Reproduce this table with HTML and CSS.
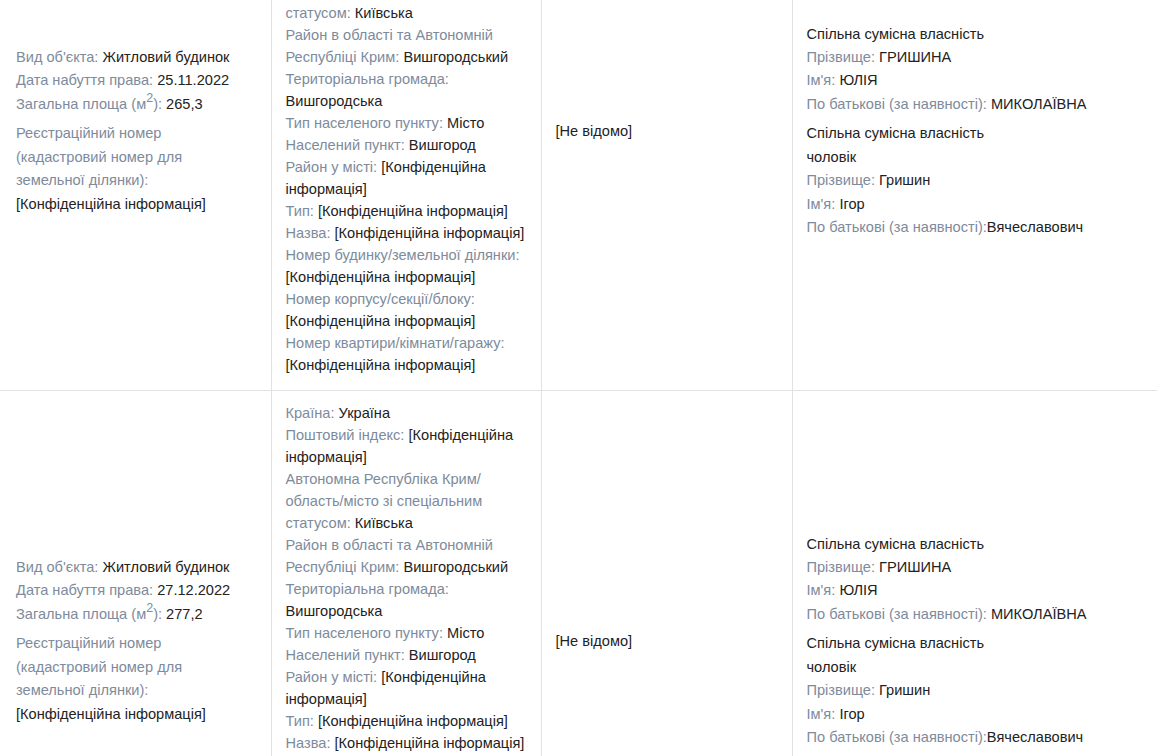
FILE: index.html
```html
<!DOCTYPE html>
<html lang="uk">
<head>
<meta charset="utf-8">
<title>Об'єкти нерухомості</title>
<link rel="stylesheet" href="styles.css">
</head>
<body>
<table class="grid">
  <colgroup>
    <col class="c1"><col class="c2"><col class="c3"><col class="c4">
  </colgroup>
  <tbody>
    <tr>
      <td class="cell side">
        <div class="block">
          <div class="line"><span class="lbl">Вид об'єкта:</span> Житловий будинок</div>
          <div class="line"><span class="lbl">Дата набуття права:</span> 25.11.2022</div>
          <div class="line"><span class="lbl">Загальна площа (м<sup class="sq">2</sup>):</span> 265,3</div>
        </div>
        <div class="block">
          <div class="line"><span class="lbl">Реєстраційний номер (кадастровий номер для земельної ділянки):</span><br>[Конфіденційна інформація]</div>
        </div>
      </td>
      <td class="cell addr">
        <div><span class="lbl">Країна:</span> Україна</div>
        <div><span class="lbl">Поштовий індекс:</span> [Конфіденційна інформація]</div>
        <div><span class="lbl">Автономна Республіка Крим/ область/місто зі спеціальним статусом:</span> Київська</div>
        <div><span class="lbl">Район в області та Автономній Республіці Крим:</span> Вишгородський</div>
        <div><span class="lbl">Територіальна громада:</span> Вишгородська</div>
        <div><span class="lbl">Тип населеного пункту:</span> Місто</div>
        <div><span class="lbl">Населений пункт:</span> Вишгород</div>
        <div><span class="lbl">Район у місті:</span> [Конфіденційна інформація]</div>
        <div><span class="lbl">Тип:</span> [Конфіденційна інформація]</div>
        <div><span class="lbl">Назва:</span> [Конфіденційна інформація]</div>
        <div><span class="lbl">Номер будинку/земельної ділянки:</span> [Конфіденційна інформація]</div>
        <div><span class="lbl">Номер корпусу/секції/блоку:</span> [Конфіденційна інформація]</div>
        <div><span class="lbl">Номер квартири/кімнати/гаражу:</span> [Конфіденційна інформація]</div>
      </td>
      <td class="cell side">[Не відомо]</td>
      <td class="cell side">
        <div class="block">
          <div class="line">Спільна сумісна власність</div>
          <div class="line"><span class="lbl">Прізвище:</span> ГРИШИНА</div>
          <div class="line"><span class="lbl">Ім'я:</span> ЮЛІЯ</div>
          <div class="line"><span class="lbl">По батькові (за наявності):</span> МИКОЛАЇВНА</div>
        </div>
        <div class="block">
          <div class="line">Спільна сумісна власність</div>
          <div class="line">чоловік</div>
          <div class="line"><span class="lbl">Прізвище:</span> Гришин</div>
          <div class="line"><span class="lbl">Ім'я:</span> Ігор</div>
          <div class="line"><span class="lbl">По батькові (за наявності):</span>Вячеславович</div>
        </div>
      </td>
    </tr>
    <tr>
      <td class="cell side">
        <div class="block">
          <div class="line"><span class="lbl">Вид об'єкта:</span> Житловий будинок</div>
          <div class="line"><span class="lbl">Дата набуття права:</span> 27.12.2022</div>
          <div class="line"><span class="lbl">Загальна площа (м<sup class="sq">2</sup>):</span> 277,2</div>
        </div>
        <div class="block">
          <div class="line"><span class="lbl">Реєстраційний номер (кадастровий номер для земельної ділянки):</span><br>[Конфіденційна інформація]</div>
        </div>
      </td>
      <td class="cell addr">
        <div><span class="lbl">Країна:</span> Україна</div>
        <div><span class="lbl">Поштовий індекс:</span> [Конфіденційна інформація]</div>
        <div><span class="lbl">Автономна Республіка Крим/ область/місто зі спеціальним статусом:</span> Київська</div>
        <div><span class="lbl">Район в області та Автономній Республіці Крим:</span> Вишгородський</div>
        <div><span class="lbl">Територіальна громада:</span> Вишгородська</div>
        <div><span class="lbl">Тип населеного пункту:</span> Місто</div>
        <div><span class="lbl">Населений пункт:</span> Вишгород</div>
        <div><span class="lbl">Район у місті:</span> [Конфіденційна інформація]</div>
        <div><span class="lbl">Тип:</span> [Конфіденційна інформація]</div>
        <div><span class="lbl">Назва:</span> [Конфіденційна інформація]</div>
        <div><span class="lbl">Номер будинку/земельної ділянки:</span> [Конфіденційна інформація]</div>
        <div><span class="lbl">Номер корпусу/секції/блоку:</span> [Конфіденційна інформація]</div>
        <div><span class="lbl">Номер квартири/кімнати/гаражу:</span> [Конфіденційна інформація]</div>
      </td>
      <td class="cell side">[Не відомо]</td>
      <td class="cell side">
        <div class="block">
          <div class="line">Спільна сумісна власність</div>
          <div class="line"><span class="lbl">Прізвище:</span> ГРИШИНА</div>
          <div class="line"><span class="lbl">Ім'я:</span> ЮЛІЯ</div>
          <div class="line"><span class="lbl">По батькові (за наявності):</span> МИКОЛАЇВНА</div>
        </div>
        <div class="block">
          <div class="line">Спільна сумісна власність</div>
          <div class="line">чоловік</div>
          <div class="line"><span class="lbl">Прізвище:</span> Гришин</div>
          <div class="line"><span class="lbl">Ім'я:</span> Ігор</div>
          <div class="line"><span class="lbl">По батькові (за наявності):</span>Вячеславович</div>
        </div>
      </td>
    </tr>
  </tbody>
</table>
</body>
</html>
```
FILE: styles.css
```css
html, body {
  margin: 0;
  padding: 0;
  background: #ffffff;
}

body {
  font-family: "Liberation Sans", Arial, sans-serif;
  font-size: 14.6px;
  color: #222222;
  overflow: hidden;
}

.grid {
  border-collapse: collapse;
  table-layout: fixed;
  width: 1157px;
  margin-top: -120px;
}

.c1 { width: 271px; }
.c2 { width: 270px; }
.c3 { width: 251px; }
.c4 { width: 365px; }

.cell {
  vertical-align: middle;
  border-top: 1px solid #e2e2e2;
  border-left: 1px solid #e2e2e2;
  padding: 11px 14px 14px 14px;
  text-align: left;
}

.cell:first-child {
  border-left: none;
  padding-left: 16px;
  padding-right: 24px;
}

.side {
  padding-bottom: 20px;
}

.addr {
  line-height: 22px;
}

.block {
  line-height: 23.4px;
}

.block + .block {
  margin-top: 6px;
}

.lbl {
  color: #7d8b9c;
}

.sq {
  font-size: 12.5px;
  line-height: 0;
  vertical-align: 7px;
}
```
